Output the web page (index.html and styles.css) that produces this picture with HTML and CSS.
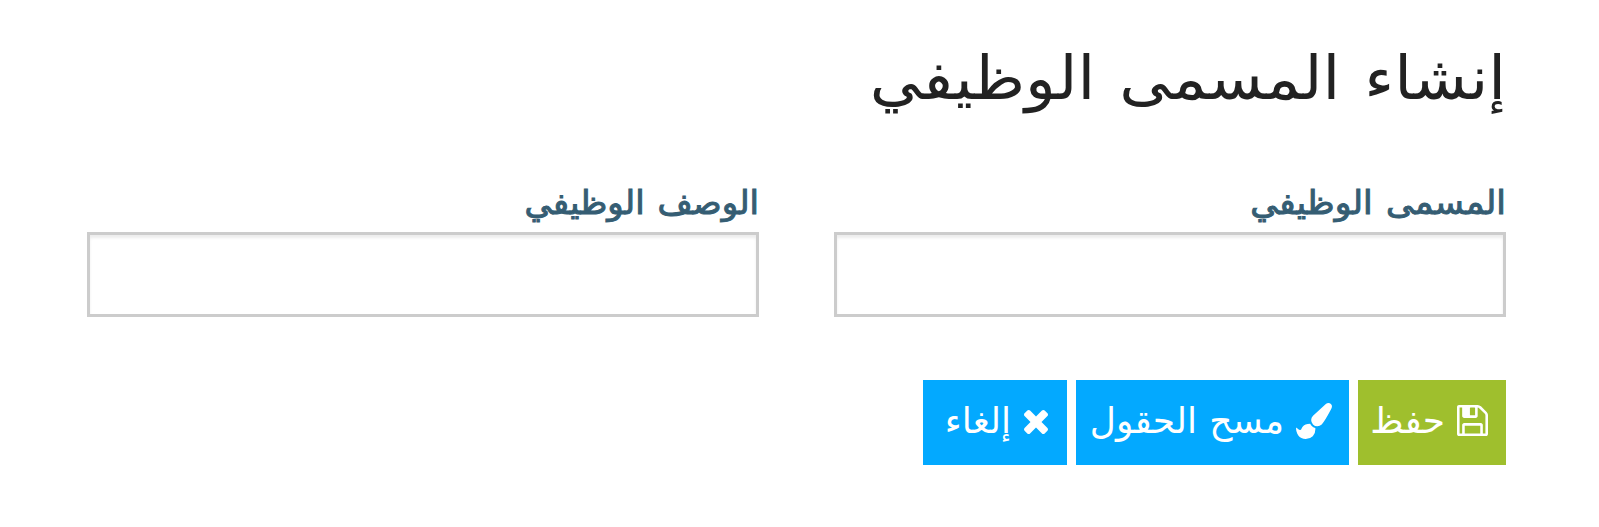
FILE: index.html
```html
<!DOCTYPE html>
<html lang="ar" dir="rtl">
<head>
<meta charset="utf-8">
<title>إنشاء المسمى الوظيفي</title>
<link rel="stylesheet" href="styles.css">
</head>
<body>
<main class="page">
<h1 class="title">إنشاء المسمى الوظيفي</h1>
<form class="form">
<div class="fields">
<label class="field"><span class="label">المسمى الوظيفي</span><input class="input" type="text"></label>
<label class="field"><span class="label label-description">الوصف الوظيفي</span><input class="input" type="text"></label>
</div>
<div class="actions">
<button type="button" class="btn save"><svg class="icon" width="31" height="31" viewBox="128 128 1536 1536"><path d="M512 1536h768v-384h-768v384zm896 0h128v-896q0-14-10-38.500t-20-34.500l-281-281q-10-10-34-20t-39-10v416q0 40-28 68t-68 28h-576q-40 0-68-28t-28-68v-416h-128v1280h128v-416q0-40 28-68t68-28h832q40 0 68 28t28 68v416zm-384-928v-320q0-13-9.500-22.500t-22.500-9.500h-192q-13 0-22.500 9.500t-9.500 22.500v320q0 13 9.500 22.500t22.500 9.500h192q13 0 22.500-9.500t9.500-22.500zm640 32v928q0 40-28 68t-68 28h-1344q-40 0-68-28t-28-68v-1344q0-40 28-68t68-28h928q40 0 88 20t76 48l280 280q28 28 48 76t20 88z"/></svg><span class="text">حفظ</span></button>
<button type="button" class="btn clear"><svg class="icon" width="36" height="36" viewBox="0 0 1792 1792"><path d="M1615 0q70 0 122.500 46.500t52.500 116.500q0 63-45 151-332 629-465 752-97 91-218 91-126 0-216.500-92.500t-90.500-219.500q0-128 92-212l638-579q59-54 130-54zm-909 1034q39 76 106.500 130t150.500 76l1 71q4 213-129.500 347t-348.500 134q-123 0-218-46.500t-152.500-127.500-86.500-183-29-220q7 5 41 30t62 44.500 59 36.500 46 17q41 0 55-37 25-66 57.500-112.500t69.500-76 88-47.500 103-25.500 125-10.500z"/></svg><span class="text">مسح الحقول</span></button>
<button type="button" class="btn cancel"><svg class="icon" width="24" height="24" viewBox="302 366 1188 1188"><path d="M1490 1322q0 40-28 68l-136 136q-28 28-68 28t-68-28l-294-294-294 294q-28 28-68 28t-68-28l-136-136q-28-28-28-68t28-68l294-294-294-294q-28-28-28-68t28-68l136-136q28-28 68-28t68 28l294 294 294-294q28-28 68-28t68 28l136 136q28 28 28 68t-28 68l-294 294 294 294q28 28 28 68z"/></svg><span class="text">إلغاء</span></button>
</div>
</form>
</main>
</body>
</html>
```
FILE: styles.css
```css
* { box-sizing: border-box; }
body { margin: 0; background: #fff; font-family: "Noto Sans", "DejaVu Sans", sans-serif; }
.page { padding: 26px 93px 0 87px; }
.title { margin: 0; height: 160px; font-size: 60px; font-weight: 400; line-height: 100px; color: #222; word-spacing: 7px; transform: scaleX(1.063); transform-origin: right; }
.fields { display: grid; grid-template-columns: 672px 672px; justify-content: space-between; }
.label { display: block; height: 46px; font-size: 33px; line-height: 32px; color: #355d73; word-spacing: 4px; -webkit-text-stroke: 1px #355d73; transform: scaleX(1.05); transform-origin: right; }
.label-description { transform: scaleX(1.03); }
.input { display: block; width: 100%; height: 85px; border: 3px solid #ccc; border-radius: 0; background: #fff; box-shadow: inset 0 3px 3px rgba(0, 0, 0, .075); outline: 0; }
.actions { display: flex; gap: 9px; margin-top: 63px; }
.btn { display: flex; align-items: center; justify-content: flex-start; gap: 12px; height: 85px; padding: 0 18px 4px; border: 0; color: #fff; font: 36px "Noto Sans", "DejaVu Sans", sans-serif; white-space: nowrap; }
.icon { flex: none; fill: currentColor; }
.text { padding-bottom: 2px; }
.save { width: 148px; background: #9fbf2d; }
.clear { width: 273px; padding-right: 17px; word-spacing: 3px; background: #03a9ff; }
.cancel { width: 144px; padding-right: 19px; gap: 13px; background: #03a9ff; }
.cancel .icon { margin-top: 3px; }
```
